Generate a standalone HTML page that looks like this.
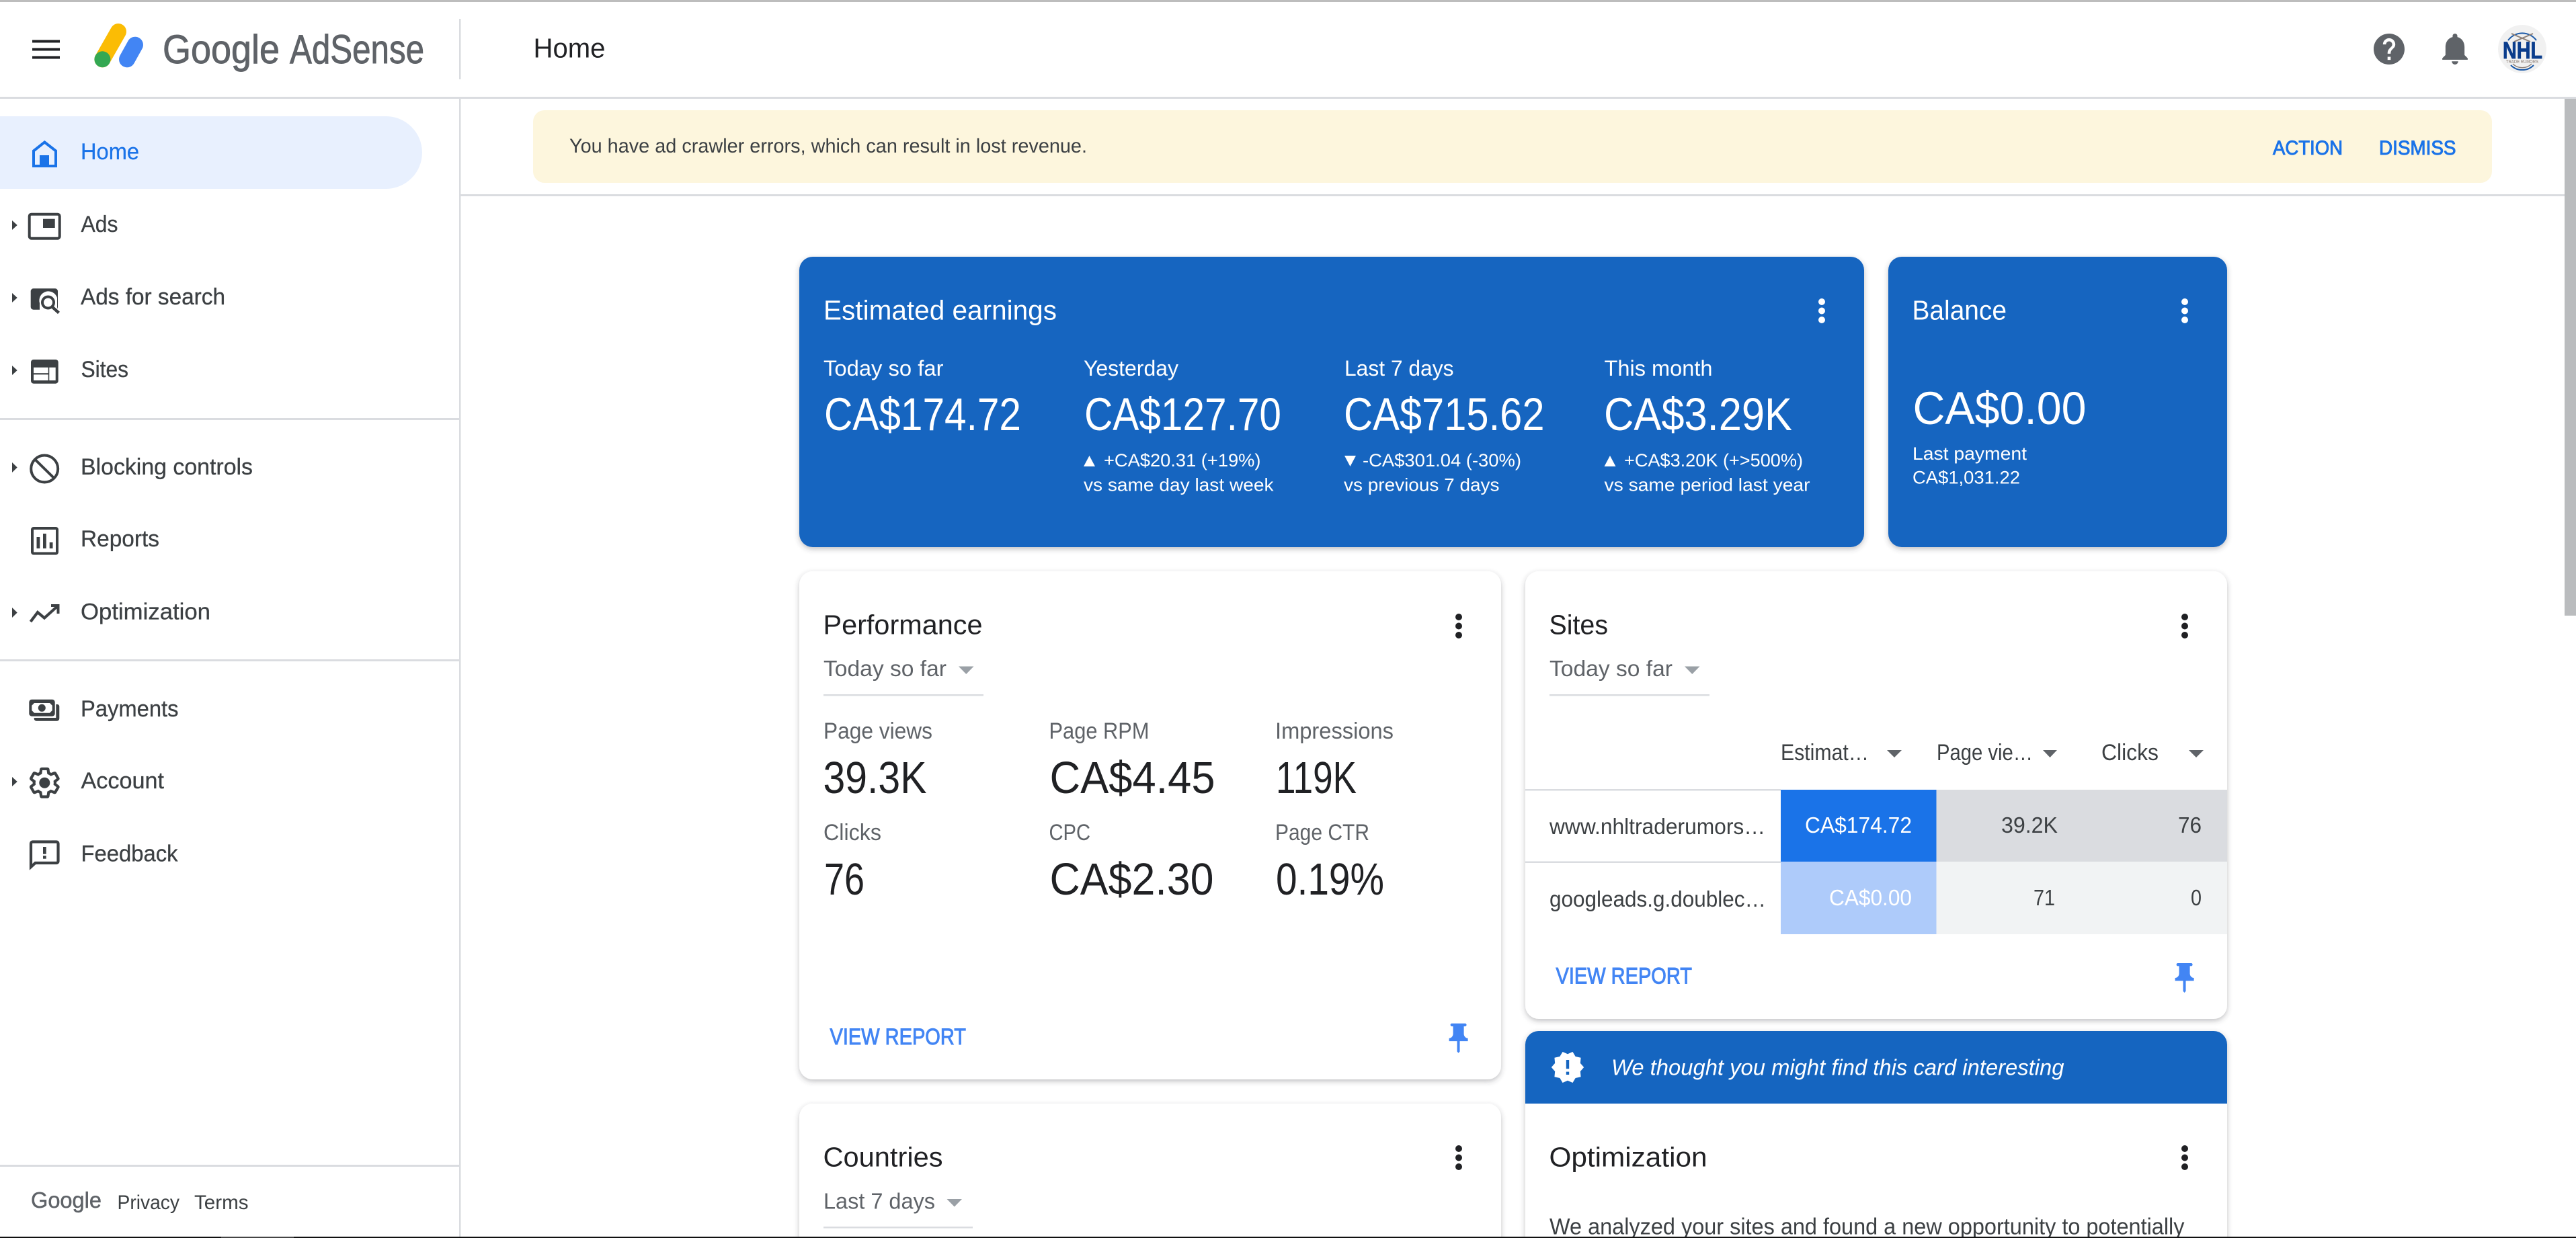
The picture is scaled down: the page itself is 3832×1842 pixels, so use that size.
<!DOCTYPE html>
<html lang="en"><head><meta charset="utf-8"><title>Google AdSense - Home</title>
<style>
html,body{margin:0;padding:0;background:#fff;width:3832px;height:1842px;overflow:hidden}
svg{display:block;font-family:"Liberation Sans",sans-serif}
.nav{font-size:34px;fill:#3c4043;stroke:#3c4043;stroke-width:.3px;transform:translate(-1px,0)}
.h{font-size:41px;fill:#202124;transform:translate(-1.5px,-1.5px)}
.hw{font-size:41px;fill:#fff;transform:translate(-2px,0)}
.s{font-size:32px;fill:#fff}
.big{font-size:69px;fill:#fff;transform:translate(-1px,0)}
.sm{font-size:27px;fill:#fff}
.dd{font-size:33px;fill:#5f6368;transform:translate(-1px,-1.5px)}
.lb{font-size:34px;fill:#5f6368;transform:translate(-1px,-1px)}
.num{font-size:67px;fill:#202124;transform:translate(-1.5px,0)}
.link{font-size:34px;fill:#4285f4;stroke:#4285f4;stroke-width:1px}
.tb{font-size:33px;fill:#3c4043;transform:translate(-1px,0)}
.ft{font-size:30px;fill:#3c4043;transform:translate(-1px,0)}
</style></head><body>
<svg width="3832" height="1842" viewBox="0 0 3832 1842" xmlns="http://www.w3.org/2000/svg">
<defs>
<filter id="sh" x="-5%" y="-5%" width="110%" height="115%"><feDropShadow dx="0" dy="3" stdDeviation="4" flood-color="#3c4043" flood-opacity=".32"/></filter>
<g id="pin"><path transform="scale(2,2.2) translate(-5,-2)" d="M16 9V4h1c.55 0 1-.45 1-1s-.45-1-1-1H7c-.55 0-1 .45-1 1s.45 1 1 1h1v5c0 1.66-1.34 3-3 3v2h5.97v7l1 1 1-1v-7H19v-2c-1.66 0-3-1.34-3-3z" fill="#4285f4"/></g>
</defs>
<rect width="3832" height="1842" fill="#fff"/>

<!-- top bar -->
<rect width="3832" height="3" fill="#bdbdbd"/>
<rect x="48" y="59.5" width="41" height="4" fill="#202124"/><rect x="48" y="71.5" width="41" height="4" fill="#202124"/><rect x="48" y="83.5" width="41" height="4" fill="#202124"/>
<g fill="none" stroke-width="24" stroke-linecap="round">
<path d="M176 47L152.400 88.300" stroke="#fbbc04"/><path d="M201 66.700L189 88.300" stroke="#4285f4"/>
</g>
<circle cx="152.400" cy="88.300" r="12" fill="#34a853"/>
<text x="242" y="94" font-size="60" fill="#5f6368" stroke="#5f6368" stroke-width=".9" textLength="174" lengthAdjust="spacingAndGlyphs">Google</text>
<text x="431" y="94" font-size="60" fill="#5f6368" stroke="#5f6368" stroke-width=".9" textLength="200" lengthAdjust="spacingAndGlyphs">AdSense</text>
<rect x="683" y="28" width="2.500" height="90" fill="#dadce0"/>
<text x="795" y="87" class="h" textLength="107" lengthAdjust="spacingAndGlyphs">Home</text>

<path transform="translate(3554,73) scale(2.300) translate(-12,-12)" fill="#5f6368" d="M12 2C6.480 2 2 6.480 2 12s4.480 10 10 10 10-4.480 10-10S17.520 2 12 2zm1 17h-2v-2h2v2zm2.070-7.750l-.9.920C13.450 12.900 13 13.500 13 15h-2v-.5c0-1.100.45-2.100 1.170-2.830l1.240-1.260c.37-.36.59-.86.59-1.410 0-1.100-.9-2-2-2s-2 .9-2 2H8c0-2.210 1.790-4 4-4s4 1.790 4 4c0 .88-.36 1.680-.93 2.250z"/>
<path transform="translate(3652,73) scale(2.360) translate(-12,-12.250)" fill="#5f6368" d="M12 22c1.100 0 2-.9 2-2h-4c0 1.100.9 2 2 2zm6-6v-5c0-3.070-1.630-5.640-4.500-6.320V4c0-.83-.67-1.500-1.500-1.500s-1.500.67-1.500 1.500v.68C7.640 5.360 6 7.920 6 11v5l-2 2v1h16v-1l-2-2z"/>
<!-- avatar -->
<circle cx="3752" cy="73" r="36" fill="#f1f1f1"/>
<path d="M3731 60a26 26 0 0 1 42 0" fill="none" stroke="#1c5aa8" stroke-width="2"/>
<path d="M3736 50l28 12M3768 50l-28 12" stroke="#8d8078" stroke-width="2" fill="none"/>
<path d="M3735 97a24 24 0 0 0 34 0" fill="none" stroke="#1c5aa8" stroke-width="2"/>
<path d="M3738 95a20 20 0 0 0 28 0" fill="none" stroke="#8d8078" stroke-width="1.500"/>
<text x="3723" y="87" font-size="35" font-weight="700" fill="#0b3d8c" stroke="#0b3d8c" stroke-width=".8" textLength="59" lengthAdjust="spacingAndGlyphs">NHL</text>
<text x="3728" y="94" font-size="7" fill="#8d8078" textLength="48" lengthAdjust="spacingAndGlyphs">TRADE RUMORS</text>

<rect y="144" width="3832" height="3" fill="#dadce0"/>

<!-- sidebar -->
<rect x="683" y="147" width="2.500" height="1695" fill="#dadce0"/>
<path d="M0 173H574a54 54 0 0 1 0 108H0z" fill="#e8f0fe"/>
<path d="M66.300 211.500L83 224.500V247H50V224.500Z" fill="none" stroke="#1a73e8" stroke-width="4"/>
<rect x="59" y="231" width="14" height="18" fill="#1a73e8"/>
<text x="121" y="237" class="nav" style="fill:#1a73e8;stroke:#1a73e8" textLength="87" lengthAdjust="spacingAndGlyphs">Home</text>

<g fill="#3c4043">
<path d="M18 328l7.700 7-7.700 7z"/><path d="M18 436l7.700 7-7.700 7z"/><path d="M18 544l7.700 7-7.700 7z"/>
<path d="M18 688l7.700 7.500-7.700 7.500z"/><path d="M18 904l7.700 7.500-7.700 7.500z"/><path d="M18 1156l7.700 7-7.700 7z"/>
</g>
<text x="121.500" y="345" class="nav" textLength="55" lengthAdjust="spacingAndGlyphs">Ads</text>
<rect x="43.700" y="318.700" width="45" height="36" rx="3" fill="none" stroke="#3c4043" stroke-width="4"/>
<rect x="64" y="325.700" width="17.700" height="13.300" fill="#3c4043"/>

<text x="121" y="453" class="nav" textLength="215" lengthAdjust="spacingAndGlyphs">Ads for search</text>
<rect x="45.700" y="429.300" width="40.300" height="31.400" rx="4" fill="#3c4043"/>
<path d="M59 470V451a13 13 0 0 1 26-8V470z" fill="#fff"/>
<circle cx="71.500" cy="450" r="8.500" fill="none" stroke="#3c4043" stroke-width="4"/>
<path d="M77.500 456.500l10 9" stroke="#3c4043" stroke-width="4.500"/>

<text x="121.500" y="561" class="nav" textLength="70.500" lengthAdjust="spacingAndGlyphs">Sites</text>
<rect x="46" y="535" width="40.700" height="35.700" rx="4" fill="#3c4043"/>
<rect x="50" y="546.700" width="21.700" height="8.500" fill="#fff"/><rect x="50" y="557.300" width="21.700" height="8.700" fill="#fff"/><rect x="73.300" y="546.700" width="9.400" height="19.300" fill="#fff"/>

<rect y="622" width="683" height="3" fill="#dadce0"/>

<text x="121" y="706" class="nav" textLength="256" lengthAdjust="spacingAndGlyphs">Blocking controls</text>
<circle cx="66.200" cy="697.500" r="20" fill="none" stroke="#3c4043" stroke-width="4"/><path d="M52 683.500l28.500 28" stroke="#3c4043" stroke-width="4"/>

<text x="121" y="813" class="nav" textLength="117" lengthAdjust="spacingAndGlyphs">Reports</text>
<rect x="48" y="786" width="37" height="37.500" rx="2" fill="none" stroke="#3c4043" stroke-width="4"/>
<rect x="54.500" y="799" width="4.800" height="17" fill="#3c4043"/><rect x="64" y="794" width="4.800" height="22" fill="#3c4043"/><rect x="73.700" y="807" width="4.800" height="9" fill="#3c4043"/>

<text x="121" y="921.500" class="nav" textLength="193" lengthAdjust="spacingAndGlyphs">Optimization</text>
<path d="M45.500 925L56 911l10 8.500 20-18" fill="none" stroke="#3c4043" stroke-width="4.200"/>
<path d="M76 901h10.500v12" fill="none" stroke="#3c4043" stroke-width="4"/>

<rect y="981" width="683" height="3" fill="#dadce0"/>

<text x="121" y="1066" class="nav" textLength="145.500" lengthAdjust="spacingAndGlyphs">Payments</text>
<rect x="43.300" y="1040.700" width="38.400" height="25" rx="4" fill="#3c4043"/>
<path d="M51 1046h23l3.700 3.700v7.300l-3.700 3.700H51l-3.700-3.700v-7.300z" fill="#fff"/>
<circle cx="62.300" cy="1053.300" r="5.500" fill="#3c4043"/>
<path d="M83.300 1048h2a3 3 0 0 1 3 3v18a3.700 3.700 0 0 1-3.700 3.700H54a3.500 3.500 0 0 1-3.300-3.700v-1h32.600z" fill="#3c4043"/>

<text x="121.500" y="1173" class="nav" textLength="123.500" lengthAdjust="spacingAndGlyphs">Account</text>
<path transform="translate(66.300,1164.700) scale(2.080) translate(-12,-12)" fill="#fff" stroke="#3c4043" stroke-width="2" d="M19.430 12.980c.04-.32.07-.64.07-.98s-.03-.66-.07-.98l2.110-1.650c.19-.15.24-.42.12-.64l-2-3.460c-.12-.22-.39-.3-.61-.22l-2.490 1c-.52-.4-1.080-.73-1.690-.98l-.38-2.650C14.460 2.180 14.250 2 14 2h-4c-.25 0-.46.18-.49.42l-.38 2.650c-.61.25-1.170.59-1.690.98l-2.490-1c-.23-.09-.49 0-.61.22l-2 3.460c-.13.22-.07.49.12.64l2.110 1.650c-.04.32-.07.65-.07.98s.03.66.07.98l-2.110 1.650c-.19.15-.24.42-.12.64l2 3.460c.12.22.39.3.61.22l2.490-1c.52.4 1.080.73 1.690.98l.38 2.650c.03.24.24.42.49.42h4c.25 0 .46-.18.49-.42l.38-2.650c.61-.25 1.170-.59 1.690-.98l2.490 1c.23.09.49 0 .61-.22l2-3.460c.12-.22.07-.49-.12-.64l-2.110-1.650z"/>
<circle cx="66.300" cy="1164.700" r="8" fill="#3c4043"/>

<text x="121.500" y="1281.500" class="nav" textLength="144" lengthAdjust="spacingAndGlyphs">Feedback</text>
<path d="M46 1290V1255a2.500 2.500 0 0 1 2.500-2.500H84a2.500 2.500 0 0 1 2.500 2.500V1281.500a2.500 2.500 0 0 1-2.500 2.500H52.500z" fill="none" stroke="#3c4043" stroke-width="4.200"/>
<rect x="64" y="1260" width="4.700" height="10.700" fill="#3c4043"/><rect x="64" y="1273.300" width="4.700" height="4.400" fill="#3c4043"/>

<rect y="1733" width="683" height="3" fill="#dadce0"/>
<text x="46" y="1797" font-size="33" fill="#5f6368" stroke="#5f6368" stroke-width=".5" textLength="105" lengthAdjust="spacingAndGlyphs">Google</text>
<text x="175.500" y="1799" class="ft" textLength="92.500" lengthAdjust="spacingAndGlyphs">Privacy</text>
<text x="290" y="1799" class="ft" textLength="80.500" lengthAdjust="spacingAndGlyphs">Terms</text>

<!-- banner -->
<rect x="793" y="164" width="2914" height="108" rx="17" fill="#fdf6dd"/>
<text x="847" y="227" font-size="29.500" fill="#3c4043" textLength="770" lengthAdjust="spacingAndGlyphs">You have ad crawler errors, which can result in lost revenue.</text>
<g font-size="30" fill="#1a73e8" stroke="#1a73e8" stroke-width="1">
<text x="3381" y="230" textLength="104" lengthAdjust="spacingAndGlyphs">ACTION</text>
<text x="3539" y="230" textLength="114.500" lengthAdjust="spacingAndGlyphs">DISMISS</text>
</g>
<rect x="685.500" y="289" width="3130" height="3" fill="#dadce0"/>
<rect x="3815" y="147" width="17" height="769" fill="#babcbe"/>

<!-- Estimated earnings -->
<rect x="1189" y="382" width="1584" height="432" rx="20" fill="#1565c0" filter="url(#sh)"/>
<text x="1227" y="475.500" class="hw" textLength="347" lengthAdjust="spacingAndGlyphs">Estimated earnings</text>
<g fill="#fff"><circle cx="2710" cy="449" r="5"/><circle cx="2710" cy="462.500" r="5"/><circle cx="2710" cy="476" r="5"/></g>
<text x="1225" y="559" class="s" textLength="178.500" lengthAdjust="spacingAndGlyphs">Today so far</text>
<text x="1612" y="559" class="s" textLength="141" lengthAdjust="spacingAndGlyphs">Yesterday</text>
<text x="2000" y="559" class="s" textLength="162.500" lengthAdjust="spacingAndGlyphs">Last 7 days</text>
<text x="2386.500" y="559" class="s" textLength="161" lengthAdjust="spacingAndGlyphs">This month</text>
<text x="1227" y="640" class="big" textLength="293" lengthAdjust="spacingAndGlyphs">CA$174.72</text>
<text x="1614" y="640" class="big" textLength="293" lengthAdjust="spacingAndGlyphs">CA$127.70</text>
<text x="2000" y="640" class="big" textLength="298.500" lengthAdjust="spacingAndGlyphs">CA$715.62</text>
<text x="2387" y="640" class="big" textLength="280" lengthAdjust="spacingAndGlyphs">CA$3.29K</text>
<g fill="#fff"><path d="M1612 694l8.500-16 8.500 16z"/><path d="M2000 678h17l-8.500 16z"/><path d="M2386.500 694l8.500-16 8.500 16z"/></g>
<text x="1642" y="694" class="sm" textLength="233.500" lengthAdjust="spacingAndGlyphs">+CA$20.31 (+19%)</text>
<text x="2027" y="694" class="sm" textLength="236" lengthAdjust="spacingAndGlyphs">-CA$301.04 (-30%)</text>
<text x="2416" y="694" class="sm" textLength="266" lengthAdjust="spacingAndGlyphs">+CA$3.20K (+&gt;500%)</text>
<text x="1612" y="730.500" class="sm" textLength="282.500" lengthAdjust="spacingAndGlyphs">vs same day last week</text>
<text x="1999" y="730.500" class="sm" textLength="231.500" lengthAdjust="spacingAndGlyphs">vs previous 7 days</text>
<text x="2386.500" y="730.500" class="sm" textLength="306" lengthAdjust="spacingAndGlyphs">vs same period last year</text>

<!-- Balance -->
<rect x="2809" y="382" width="504" height="432" rx="20" fill="#1565c0" filter="url(#sh)"/>
<text x="2846.500" y="475.500" class="hw" textLength="140.500" lengthAdjust="spacingAndGlyphs">Balance</text>
<g fill="#fff"><circle cx="3250" cy="449" r="5"/><circle cx="3250" cy="462.500" r="5"/><circle cx="3250" cy="476" r="5"/></g>
<text x="2846.500" y="631" class="big" textLength="258" lengthAdjust="spacingAndGlyphs">CA$0.00</text>
<text x="2845" y="684" class="sm" textLength="170" lengthAdjust="spacingAndGlyphs">Last payment</text>
<text x="2845" y="719.500" class="sm" textLength="160" lengthAdjust="spacingAndGlyphs">CA$1,031.22</text>

<!-- Performance -->
<rect x="1189" y="850" width="1044" height="756" rx="20" fill="#fff" filter="url(#sh)"/>
<text x="1226" y="945" class="h" textLength="237" lengthAdjust="spacingAndGlyphs">Performance</text>
<g fill="#202124"><circle cx="2170" cy="918" r="5"/><circle cx="2170" cy="931.500" r="5"/><circle cx="2170" cy="945" r="5"/></g>
<text x="1226" y="1007.500" class="dd" textLength="183" lengthAdjust="spacingAndGlyphs">Today so far</text>
<path d="M1426 991.500h22.500l-11.250 11.500z" fill="#9aa0a6"/>
<rect x="1225" y="1033" width="238" height="2.500" fill="#dadce0"/>
<text x="1226" y="1100" class="lb" textLength="162" lengthAdjust="spacingAndGlyphs">Page views</text>
<text x="1561.500" y="1100" class="lb" textLength="149" lengthAdjust="spacingAndGlyphs">Page RPM</text>
<text x="1898" y="1100" class="lb" textLength="176" lengthAdjust="spacingAndGlyphs">Impressions</text>
<text x="1226" y="1180" class="num" textLength="154" lengthAdjust="spacingAndGlyphs">39.3K</text>
<text x="1563" y="1180" class="num" textLength="246" lengthAdjust="spacingAndGlyphs">CA$4.45</text>
<text x="1899.500" y="1180" class="num" textLength="120" lengthAdjust="spacingAndGlyphs">119K</text>
<text x="1226" y="1251" class="lb" textLength="86" lengthAdjust="spacingAndGlyphs">Clicks</text>
<text x="1561.500" y="1251" class="lb" textLength="61.500" lengthAdjust="spacingAndGlyphs">CPC</text>
<text x="1898" y="1251" class="lb" textLength="140" lengthAdjust="spacingAndGlyphs">Page CTR</text>
<text x="1227.500" y="1331" class="num" textLength="60" lengthAdjust="spacingAndGlyphs">76</text>
<text x="1563" y="1331" class="num" textLength="244" lengthAdjust="spacingAndGlyphs">CA$2.30</text>
<text x="1899.500" y="1331" class="num" textLength="161" lengthAdjust="spacingAndGlyphs">0.19%</text>
<text x="1234.500" y="1554" class="link" textLength="202.500" lengthAdjust="spacingAndGlyphs">VIEW REPORT</text>
<use href="#pin" x="2155.600" y="1522.700"/>

<!-- Sites -->
<rect x="2269" y="850" width="1044" height="666" rx="20" fill="#fff" filter="url(#sh)"/>
<text x="2306" y="945" class="h" textLength="87.500" lengthAdjust="spacingAndGlyphs">Sites</text>
<g fill="#202124"><circle cx="3250" cy="918" r="5"/><circle cx="3250" cy="931.500" r="5"/><circle cx="3250" cy="945" r="5"/></g>
<text x="2306" y="1007.500" class="dd" textLength="183" lengthAdjust="spacingAndGlyphs">Today so far</text>
<path d="M2506 991.500h22.500l-11.250 11.500z" fill="#9aa0a6"/>
<rect x="2305" y="1033" width="238" height="2.500" fill="#dadce0"/>
<text x="2650" y="1132" class="lb" style="fill:#3c4043" textLength="131" lengthAdjust="spacingAndGlyphs">Estimat…</text>
<text x="2882" y="1132" class="lb" style="fill:#3c4043" textLength="143" lengthAdjust="spacingAndGlyphs">Page vie…</text>
<text x="3127" y="1132" class="lb" style="fill:#3c4043" textLength="85" lengthAdjust="spacingAndGlyphs">Clicks</text>
<g fill="#5f6368"><path d="M2807 1116h22l-11 11z"/><path d="M3039 1116h21l-10.500 11z"/><path d="M3256 1116h22l-11 11z"/></g>
<rect x="2269" y="1174" width="380" height="2.500" fill="#dadce0"/>
<rect x="2269" y="1281.500" width="380" height="2.500" fill="#dadce0"/>
<rect x="2649" y="1175" width="231.500" height="107" fill="#1a73e8"/>
<rect x="2880.500" y="1175" width="432.500" height="107" fill="#dadce0"/>
<rect x="2649" y="1282" width="231.500" height="108" fill="#aecbfa"/>
<rect x="2880.500" y="1282" width="432.500" height="108" fill="#f1f3f4"/>
<text x="2306" y="1241" class="tb" textLength="321" lengthAdjust="spacingAndGlyphs">www.nhltraderumors…</text>
<text x="2306" y="1349" class="tb" textLength="322" lengthAdjust="spacingAndGlyphs">googleads.g.doublec…</text>
<text x="2686" y="1239" class="tb" style="fill:#fff" textLength="159" lengthAdjust="spacingAndGlyphs">CA$174.72</text>
<text x="2978" y="1239" class="tb" textLength="84" lengthAdjust="spacingAndGlyphs">39.2K</text>
<text x="3241" y="1239" class="tb" textLength="35" lengthAdjust="spacingAndGlyphs">76</text>
<text x="2722" y="1347" class="tb" style="fill:#fff" textLength="123" lengthAdjust="spacingAndGlyphs">CA$0.00</text>
<text x="3026" y="1347" class="tb" textLength="32" lengthAdjust="spacingAndGlyphs">71</text>
<text x="3260" y="1347" class="tb" textLength="16" lengthAdjust="spacingAndGlyphs">0</text>
<text x="2314.500" y="1463.500" class="link" textLength="202.500" lengthAdjust="spacingAndGlyphs">VIEW REPORT</text>
<use href="#pin" x="3235.600" y="1433"/>

<!-- Countries -->
<rect x="1189" y="1642" width="1044" height="230" rx="20" fill="#fff" filter="url(#sh)"/>
<text x="1226" y="1737" class="h" textLength="178" lengthAdjust="spacingAndGlyphs">Countries</text>
<g fill="#202124"><circle cx="2170" cy="1709" r="5"/><circle cx="2170" cy="1722.500" r="5"/><circle cx="2170" cy="1736" r="5"/></g>
<text x="1226" y="1800" class="dd" textLength="166" lengthAdjust="spacingAndGlyphs">Last 7 days</text>
<path d="M1408.500 1784h22.500l-11.250 11.500z" fill="#9aa0a6"/>
<rect x="1225" y="1825" width="222" height="2.500" fill="#dadce0"/>

<!-- Optimization -->
<rect x="2269" y="1534" width="1044" height="338" rx="20" fill="#fff" filter="url(#sh)"/>
<path d="M2269 1642v-88a20 20 0 0 1 20-20h1004a20 20 0 0 1 20 20v88z" fill="#1565c0"/>
<path transform="translate(2332,1588) scale(2.200) translate(-12,-12)" fill="#fff" d="M23 12l-2.440-2.780.34-3.680-3.610-.82-1.890-3.180L12 3 8.600 1.540 6.710 4.720l-3.610.81.34 3.680L1 12l2.440 2.780-.34 3.690 3.610.82 1.890 3.180L12 21l3.400 1.460 1.890-3.180 3.610-.82-.34-3.680L23 12zm-10 5h-2v-2h2v2zm0-4h-2V7h2v6z"/>
<text x="2397" y="1599.500" font-size="33" font-style="italic" fill="#fff" textLength="673.500" lengthAdjust="spacingAndGlyphs">We thought you might find this card interesting</text>
<text x="2306" y="1737" class="h" textLength="235" lengthAdjust="spacingAndGlyphs">Optimization</text>
<g fill="#202124"><circle cx="3250" cy="1709" r="5"/><circle cx="3250" cy="1722.500" r="5"/><circle cx="3250" cy="1736" r="5"/></g>
<text x="2306" y="1837.500" class="lb" style="fill:#3c4043" textLength="944.500" lengthAdjust="spacingAndGlyphs">We analyzed your sites and found a new opportunity to potentially</text>

<!-- bottom edge -->
<rect y="1840" width="3832" height="2" fill="#111"/>
<rect x="329" y="1840" width="108" height="2" fill="#444"/>
</svg>
</body></html>
